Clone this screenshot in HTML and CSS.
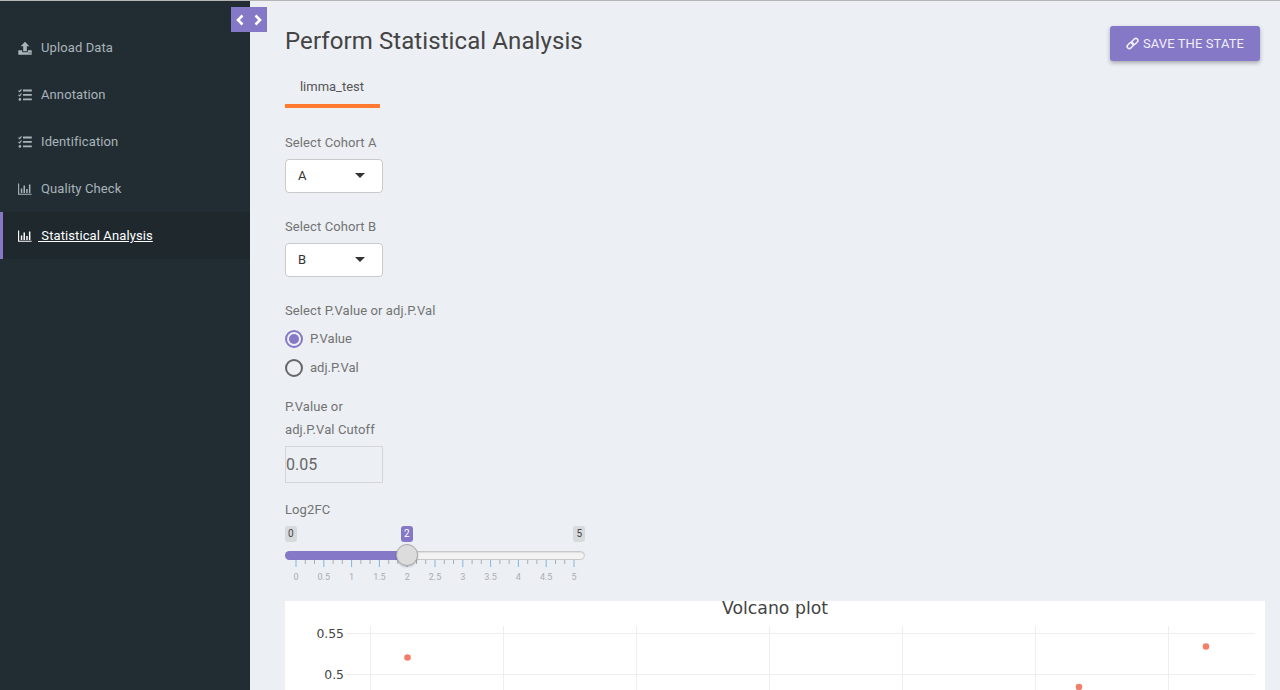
FILE: index.html
```html
<!DOCTYPE html>
<html lang="en">
<head>
    <meta charset="UTF-8">
    <meta name="viewport" content="width=device-width, initial-scale=1.0">
    <title>Perform Statistical Analysis</title>
    <link rel="stylesheet" href="styles.css">
</head>
<body>
    <div class="app">
        <aside class="sidebar">
            <div class="toggle">
                <svg width="10" height="12" viewBox="0 0 10 12"><path d="M7.5 1.5 3 6l4.5 4.5" fill="none" stroke="#fff" stroke-width="2.6"/></svg>
                <svg width="10" height="12" viewBox="0 0 10 12"><path d="M2.5 1.5 7 6l-4.5 4.5" fill="none" stroke="#fff" stroke-width="2.6"/></svg>
            </div>
            <nav class="menu">
                <a class="menu-item">
                    <svg class="menu-icon" viewBox="0 0 14 14"><path d="M7 .8 11.300 5.200H8.800v5H5.200v-5H2.700zM.3 9.200h3.900v2h5.600v-2h3.900v4.500H.3z" fill="currentColor"/><path d="M10.500 12h1M12 12h.8" stroke="#222d33" stroke-width=".8"/></svg>
                    <span>Upload Data</span>
                </a>
                <a class="menu-item">
                    <svg class="menu-icon" viewBox="0 0 14 14"><path d="M.5 2.600l1.100 1.100 1.900-2.400M.5 6.800l1.100 1.100 1.900-2.400" fill="none" stroke="currentColor" stroke-width="1.200"/><circle cx="1.900" cy="11.400" r="1.300" fill="currentColor"/><path d="M5 1.600h8.800v1.800H5zM5 6h8.800v1.800H5zM5 10.500h8.800v1.800H5z" fill="currentColor"/></svg>
                    <span>Annotation</span>
                </a>
                <a class="menu-item">
                    <svg class="menu-icon" viewBox="0 0 14 14"><path d="M.5 2.600l1.100 1.100 1.900-2.400M.5 6.800l1.100 1.100 1.900-2.400" fill="none" stroke="currentColor" stroke-width="1.200"/><circle cx="1.900" cy="11.400" r="1.300" fill="currentColor"/><path d="M5 1.600h8.800v1.800H5zM5 6h8.800v1.800H5zM5 10.500h8.800v1.800H5z" fill="currentColor"/></svg>
                    <span>Identification</span>
                </a>
                <a class="menu-item">
                    <svg class="menu-icon" viewBox="0 0 14 14"><path d="M.6 1.500v10.800h13" fill="none" stroke="currentColor" stroke-width="1.100"/><path d="M2.800 6.500h1.500v4.500H2.800zM5.500 3.500H7V11H5.500zM8.200 7h1.500v4H8.200zM10.900 2.500h1.500V11h-1.500z" fill="currentColor"/></svg>
                    <span>Quality Check</span>
                </a>
                <a class="menu-item active">
                    <svg class="menu-icon" viewBox="0 0 14 14"><path d="M.6 1.500v10.800h13" fill="none" stroke="currentColor" stroke-width="1.100"/><path d="M2.800 6.500h1.500v4.500H2.800zM5.500 3.500H7V11H5.500zM8.200 7h1.500v4H8.200zM10.900 2.500h1.500V11h-1.500z" fill="currentColor"/></svg>
                    <span>&nbsp;Statistical Analysis</span>
                </a>
            </nav>
        </aside>

        <main class="content">
            <div class="page-head">
                <h1>Perform Statistical Analysis</h1>
                <button class="save-button">
                    <svg width="13" height="13" viewBox="0 0 13 13"><g fill="none" stroke="currentColor" stroke-width="1.600"><rect x="5.300" y="2.400" width="7" height="4.200" rx="2.100" transform="rotate(-45 8.800 4.500)"/><rect x="0.800" y="6.400" width="7" height="4.200" rx="2.100" transform="rotate(-45 4.300 8.500)"/></g></svg>
                    SAVE THE STATE
                </button>
            </div>

            <div class="tabs"><div class="tab">limma_test</div></div>

            <label class="field-label first">Select Cohort A</label>
            <div class="select"><span>A</span><i class="caret"></i></div>

            <label class="field-label cohort-b">Select Cohort B</label>
            <div class="select"><span>B</span><i class="caret"></i></div>

            <label class="field-label radio-title">Select P.Value or adj.P.Val</label>
            <div class="radio-row"><i class="radio checked"></i><span>P.Value</span></div>
            <div class="radio-row"><i class="radio"></i><span>adj.P.Val</span></div>

            <label class="field-label cutoff">P.Value or<br>adj.P.Val Cutoff</label>
            <div class="number-input">0.05</div>

            <label class="field-label log-label">Log2FC</label>
            <div class="slider">
                <div class="slider-badges">
                    <span class="badge">0</span>
                    <span class="badge badge-value">2</span>
                    <span class="badge">5</span>
                </div>
                <div class="track">
                    <div class="track-fill"></div>
                    <div class="thumb"></div>
                </div>
                <svg class="scale" width="300" height="26" viewBox="0 0 300 26">
                    <path d="M11 0v7M38.800 0v7M66.600 0v7M94.400 0v7M122.200 0v7M150 0v7M177.800 0v7M205.600 0v7M233.400 0v7M261.200 0v7M289 0v7" stroke="#7fb6de" fill="none"/>
                    <path d="M20.300 0v4M29.500 0v4M48.100 0v4M57.300 0v4M75.900 0v4M85.100 0v4M103.700 0v4M112.900 0v4M131.500 0v4M140.700 0v4M159.300 0v4M168.500 0v4M187.100 0v4M196.300 0v4M214.900 0v4M224.100 0v4M242.700 0v4M251.900 0v4M270.500 0v4M279.700 0v4" stroke="#a9aeb3" fill="none"/>
                    <g class="scale-text">
                        <text x="11" y="20">0</text><text x="38.800" y="20">0.5</text><text x="66.600" y="20">1</text><text x="94.400" y="20">1.5</text><text x="122.200" y="20">2</text><text x="150" y="20">2.5</text><text x="177.800" y="20">3</text><text x="205.600" y="20">3.5</text><text x="233.400" y="20">4</text><text x="261.200" y="20">4.5</text><text x="289" y="20">5</text>
                    </g>
                </svg>
            </div>

            <section class="plot">
                <svg width="980" height="89" viewBox="0 0 980 89">
                    <text class="plot-title" x="490" y="13">Volcano plot</text>
                    <path d="M85.500 25v64M218.500 25v64M351.500 25v64M484.500 25v64M617.500 25v64M750.500 25v64M883.500 25v64M61 32.500h909M61 73.500h909" stroke="#eee" fill="none"/>
                    <text class="plot-axis" x="59" y="37">0.55</text>
                    <text class="plot-axis" x="59" y="78">0.5</text>
                    <circle cx="122.500" cy="56.500" r="3.300" fill="#f47f68"/>
                    <circle cx="794" cy="86" r="3.300" fill="#f47f68"/>
                    <circle cx="921" cy="45.500" r="3.300" fill="#f47f68"/>
                </svg>
            </section>
        </main>
    </div>
</body>
</html>
```

FILE: styles.css
```css
* {
    box-sizing: border-box;
}
html, body {
    margin: 0;
    height: 100%;
    overflow: hidden;
}
body {
    background: #eceff4;
    font-family: Roboto, "Liberation Sans", sans-serif;
    color: #666;
    font-size: 13px;
    border-top: 1px solid #b5b5b5;
}
.app {
    display: flex;
    height: 689px;
}
.sidebar {
    position: relative;
    width: 250px;
    flex: none;
    background: #222d33;
    padding-top: 23px;
}
.toggle {
    position: absolute;
    top: 6px;
    left: 231px;
    width: 36px;
    height: 25px;
    background: #8578c6;
    display: flex;
    align-items: center;
    justify-content: space-between;
    padding: 0 4px;
}
.menu-item {
    display: flex;
    align-items: center;
    height: 47px;
    padding-left: 18px;
    color: #a9b4ba;
    letter-spacing: 0.1px;
}
.menu-icon {
    width: 14px;
    height: 14px;
    margin-right: 9px;
}
.menu-item.active {
    background: #1e282d;
    border-left: 3px solid #8578c6;
    padding-left: 15px;
    color: #fff;
}
.menu-item.active .menu-icon {
    margin-right: 6px;
}
.menu-item.active span {
    text-decoration: underline;
}

.content {
    flex: 1;
    padding: 0 15px 0 35px;
    overflow: hidden;
}
.page-head {
    display: flex;
    justify-content: space-between;
    align-items: flex-start;
    padding: 25px 5px 0 0;
    height: 66px;
}
h1 {
    margin: 0;
    font-size: 24px;
    font-weight: 400;
    line-height: 30px;
    color: #444;
    letter-spacing: 0.09px;
}
.save-button {
    width: 150px;
    height: 35px;
    border: none;
    border-radius: 3px;
    background: #8578c6;
    color: #f1eff9;
    font-family: inherit;
    font-size: 13px;
    letter-spacing: 0.1px;
    box-shadow: 0 2px 4px rgba(0, 0, 0, 0.3);
    display: flex;
    align-items: center;
    justify-content: center;
    gap: 4px;
    padding: 0;
}
.tabs {
    height: 41px;
}
.tab {
    width: 95px;
    height: 41px;
    padding: 11px 1px 0 0;
    text-align: center;
    line-height: 18px;
    color: #555;
    border-bottom: 4px solid #ff7a2f;
}
.field-label {
    display: block;
    line-height: 23px;
    letter-spacing: 0.1px;
    color: #737373;
}
.field-label.first {
    margin-top: 23px;
    margin-bottom: 5px;
}
.field-label.cohort-b {
    margin-top: 22px;
    margin-bottom: 5px;
}
.field-label.radio-title {
    margin-top: 22px;
    margin-bottom: 2px;
}
.select {
    width: 98px;
    height: 34px;
    background: #fff;
    border: 1px solid #c9c9c9;
    border-radius: 4px;
    padding: 0 17px 2px 12px;
    display: flex;
    align-items: center;
    justify-content: space-between;
    color: #333;
}
.caret {
    width: 0;
    height: 0;
    border-left: 5px solid transparent;
    border-right: 5px solid transparent;
    border-top: 5px solid #333;
}
.radio-row {
    display: flex;
    align-items: center;
    height: 29px;
    gap: 7px;
    color: #737373;
}
.radio {
    width: 18px;
    height: 18px;
    border: 2px solid #666;
    border-radius: 50%;
    display: flex;
    align-items: center;
    justify-content: center;
}
.radio.checked {
    border-color: #8578c6;
}
.radio.checked::after {
    content: "";
    width: 10px;
    height: 10px;
    border-radius: 50%;
    background: #8578c6;
}
.field-label.cutoff {
    margin-top: 13px;
    margin-bottom: 5px;
}
.number-input {
    width: 98px;
    height: 37px;
    border: 1px solid #d3d5d8;
    padding-left: 0;
    font-size: 16px;
    line-height: 35px;
    color: #666;
}
.field-label.log-label {
    margin-top: 15px;
}
.slider {
    width: 300px;
    height: 69px;
    margin-top: 5px;
}
.slider-badges {
    position: relative;
    display: flex;
    justify-content: space-between;
    height: 16px;
}
.badge {
    height: 16px;
    padding: 0 3px;
    min-width: 11px;
    background: #d7dadd;
    border-radius: 3px;
    font-size: 10px;
    line-height: 16px;
    color: #444;
    text-align: center;
}
.badge-value {
    position: absolute;
    left: 116px;
    background: #8578c6;
    color: #fff;
}
.track {
    position: relative;
    height: 9px;
    margin-top: 9px;
    background: #f3f3f3;
    border: 1px solid #c8c8c8;
    border-radius: 5px;
    box-shadow: inset 0 1px 1px rgba(0, 0, 0, 0.08);
}
.track-fill {
    width: 115px;
    height: 9px;
    margin: -1px;
    background: #8578c6;
    border-radius: 5px 0 0 5px;
}
.thumb {
    position: absolute;
    left: 110px;
    top: -8px;
    width: 22px;
    height: 22px;
    border-radius: 50%;
    background: #dcdcdc;
    border: 1px solid #aaa;
    box-shadow: 0 1px 2px rgba(0, 0, 0, 0.2);
}
.scale {
    display: block;
}
.scale-text text {
    font-size: 9px;
    fill: #a9aeb3;
    text-anchor: middle;
}
.plot {
    width: 980px;
    height: 89px;
    margin-top: 6px;
    background: #fff;
}
.plot svg {
    display: block;
}
.plot-title {
    font-family: "DejaVu Sans", sans-serif;
    font-size: 17.3px;
    fill: #444;
    text-anchor: middle;
}
.plot-axis {
    font-family: "DejaVu Sans", sans-serif;
    font-size: 12.400px;
    fill: #444;
    text-anchor: end;
}
```
